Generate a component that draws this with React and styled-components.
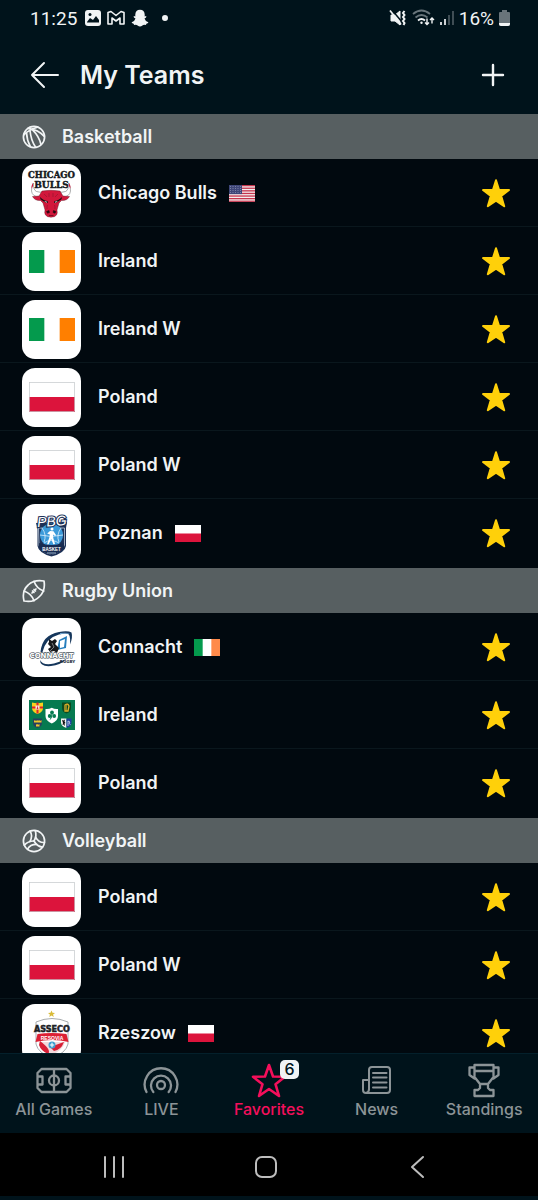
import React from "react"
import styled, { createGlobalStyle } from "styled-components"

const GlobalStyle = createGlobalStyle`
  * {
    box-sizing: border-box;
  }

  body {
    margin: 0;
    background: #00131b;
    font-family: Inter, "Liberation Sans", sans-serif;
  }
`

/* SHELL */

const Screen = styled.div`
  display: flex;
  flex-direction: column;
  height: 100vh;
  padding-bottom: 4px;
  background: #00131b;
  color: #f1f4f5;
`

const StatusBar = styled.div`
  display: flex;
  justify-content: space-between;
  align-items: center;
  height: 36px;
  padding: 0 28px 0 30px;
  flex: none;
  font-family: Roboto, sans-serif;
  font-size: 19px;
`

const StatusGroup = styled.div`
  display: flex;
  align-items: center;
  gap: ${(p) => p.$gap}px;

  svg {
    display: block;
  }
`

const Clock = styled.span`
  margin-right: 2px;
`

const Header = styled.header`
  display: flex;
  align-items: center;
  height: 78px;
  padding: 0 32px 0 30px;
  flex: none;
`

const Title = styled.h1`
  flex: 1;
  margin: 0 0 0 20px;
  font-size: 25px;
  font-weight: 600;
  line-height: 30px;
`

const IconButton = styled.button`
  display: block;
  padding: 0;
  border: 0;
  background: none;
  color: inherit;
  cursor: pointer;

  svg {
    display: block;
  }
`

/* TEAM LIST */

const Content = styled.main`
  flex: 1;
  min-height: 0;
  overflow-y: auto;
  scrollbar-width: none;
  background: #01090f;
`

const SectionTitle = styled.h2`
  display: flex;
  align-items: center;
  gap: 16px;
  height: 45px;
  margin: 0;
  padding: 0 22px;
  background: #575f61;
  font-size: 18px;
  font-weight: 600;
`

const List = styled.ul`
  margin: 0;
  padding: 0 0 1px;
  list-style: none;
`

const Row = styled.li`
  display: flex;
  align-items: center;
  height: 68px;
  padding: 0 28px 0 22px;

  & + & {
    box-shadow: 0 -1px 0 #0a171d;
  }
`

const Tile = styled.div`
  display: grid;
  place-items: center;
  width: 59px;
  height: 59px;
  border-radius: 13px;
  background: #fff;

  svg {
    display: block;
  }
`

const TeamName = styled.span`
  margin: 0 12px 0 17px;
  font-size: 18px;
  font-weight: 600;
  line-height: 24px;
`

const StarButton = styled(IconButton)`
  margin-left: auto;
`

/* BOTTOM NAVIGATION */

const Tabs = styled.nav`
  display: grid;
  grid-template-columns: repeat(5, 1fr);
  height: 80px;
  flex: none;
  border-top: 1px solid #04202b;
`

const Tab = styled.a`
  display: flex;
  flex-direction: column;
  align-items: center;
  padding-top: 8px;
  color: ${(p) => (p.$active ? "#f40f5b" : "#8c9497")};
  font-size: 16px;
  font-weight: 500;
  line-height: 22px;
  text-decoration: none;
  white-space: nowrap;
`

const TabIcon = styled.span`
  position: relative;
  height: 36px;

  svg {
    display: block;
  }
`

const Badge = styled.span`
  position: absolute;
  top: -2px;
  left: 29px;
  width: 19px;
  height: 19px;
  border-radius: 5px;
  background: #eff2f4;
  color: #00131b;
  font-size: 16px;
  line-height: 19px;
  text-align: center;
`

const SystemNav = styled.nav`
  display: flex;
  justify-content: space-between;
  align-items: center;
  height: 63px;
  padding: 5px 20% 0 19%;
  flex: none;
  background: #000;
  color: #bdbdbd;
`

/* FLAGS */

const PolandFlag = ({ width, height, outline }) => (
  <svg width={width} height={height} viewBox="0 0 46 30" preserveAspectRatio="none">
    <rect width="46" height="30" fill="#fff" />
    <rect y="15" width="46" height="15" fill="#dc143c" />
    {outline && <rect x=".5" y=".5" width="45" height="29" fill="none" stroke="#c4c8ca" strokeWidth=".7" />}
  </svg>
)

const IrelandFlag = ({ width, height, orange = "#ff7f00" }) => (
  <svg width={width} height={height} viewBox="0 0 3 2" preserveAspectRatio="none">
    <rect width="3" height="2" fill="#fff" />
    <rect width="1" height="2" fill="#049a4d" />
    <rect x="2" width="1" height="2" fill={orange} />
  </svg>
)

const UsaFlag = () => (
  <svg width="26" height="17" viewBox="0 0 26 17">
    <rect width="26" height="17" fill="#f4eeee" />
    {[0, 1, 2, 3, 4, 5, 6].map((i) => (
      <rect key={i} y={i * 2.6} width="26" height="1.3" fill="#c5344c" />
    ))}
    <rect width="13" height="9.1" fill="#3e4678" />
    {[1.5, 3.5, 5.5, 7.5].map((y) =>
      [1.5, 4, 6.5, 9, 11.5].map((x) => <circle key={`${x}-${y}`} cx={x} cy={y} r=".45" fill="#b9bdd4" />)
    )}
  </svg>
)

const IrfuFlag = () => (
  <svg width="46" height="30" viewBox="0 0 46 30">
    <rect width="46" height="30" fill="#067a50" />
    <path d="M3 2.5q5 1.500 11 0V8q0 4-5.500 6Q3 12 3 8Z" fill="#f6d21c" />
    <path d="M7.500 2.500h2v4H14v2H9.500v5h-2v-5H3v-2h4.500Z" fill="#dc2430" />
    <rect x="6.500" y="5.500" width="4" height="4" fill="#f8e9e0" />
    <path d="m8.500 5.800.900 3.200h-1.800Z" fill="#dc2430" />
    <path d="M33 2.500h9V8q0 4-4.500 5.500Q33 12 33 8Z" fill="#0c4a20" />
    <path d="M36 11V5q3-2 4 1l-1 5Z" fill="none" stroke="#dcae29" strokeWidth="1.300" />
    <path d="M37.500 5v6" stroke="#dcae29" strokeWidth=".6" />
    <path d="M4 18.500h9V23q0 3.500-4.500 5Q4 26.500 4 23Z" fill="#28405f" />
    <path d="m5 20 1.200 1 .8-1 .8 1L9 20v2.500H5Zm4 0 1 1 .8-1 .8 1 .900-1v2.500H9Zm-2 4 1 .8.7-.8.8.8 1-.8v2.500H7Z" fill="#ecc62c" />
    <path d="M32 18.500h5.500V28Q32 26 32 22.500Z" fill="#f3f3f3" />
    <path d="M37.500 18.500h5v4q0 4-5 5.500Z" fill="#1c3f9c" />
    <path d="m33 20 1.500.5 1.500-1-.5 2 1 1.500-1 .5.500 2.500-1.500-1.500-1 .5.500-2Z" fill="#111" />
    <path d="M39 26v-5l2 1-1 1.500 1.500 1" fill="none" stroke="#d7def0" strokeWidth=".8" />
    <path d="M16.500 9q3.200.500 6.300-1.200Q25.800 9.500 29 9v7q0 5-6.200 7.500Q16.500 21 16.500 16Z" fill="#fff" />
    <circle cx="23" cy="12.500" r="1.900" fill="#077b50" />
    <circle cx="20.700" cy="16" r="1.900" fill="#077b50" />
    <circle cx="25.200" cy="16" r="1.900" fill="#077b50" />
    <path d="M23 13.500q0 4-1.800 6" fill="none" stroke="#077b50" strokeWidth="1" />
  </svg>
)

/* CLUB LOGOS */

const BullsLogo = () => (
  <svg width="59" height="59" viewBox="0 0 59 59">
    <g fill="#15191c" stroke="#15191c" strokeWidth=".4" fontFamily="DejaVu Serif, Liberation Serif, serif" fontWeight="700" textAnchor="middle">
      <text x="29.500" y="14" fontSize="8.500">CHICAGO</text>
      <text x="29.500" y="23.500" fontSize="9">BULLS</text>
    </g>
    <g fill="#fff" stroke="#77797b" strokeWidth=".6" strokeLinejoin="round">
      <path d="M18 33.500q-8-1-8.500-6.500-.3-4 2-8-.5 7 3 8.500 3 1.200 9 .5Z" />
      <path d="M40 33.500q8-1 8.500-6.500.3-4-2-8 .5 7-3 8.500-3 1.200-9 .5Z" />
    </g>
    <path d="M10.800 18.800q-1.600 3-1.200 6l1.500-3ZM47.200 18.800q1.600 3 1.200 6l-1.500-3Z" fill="#d2173b" />
    <path d="M20 27q9-1.500 18 0l3 5 6.500.5q-2.500 4.500-8 4L37 39l-2 7q.8 3-.5 5-1.500 2.200-5.500 2.200T23.500 51q-1.300-2-.5-5l-2-7-2.500-2.500q-5.500.5-8-4L17 32Z" fill="#d2173b" stroke="#531323" strokeWidth=".4" />
    <path d="M18 33q4 4 7.500 4l.5 2-3-.8-4.500-3ZM40 33q-4 4-7.500 4l-.5 2 3-.8 4.500-3Z" fill="#161012" />
    <path d="m22 37 3 .8-.5 1ZM36 37l-3 .8.500 1Z" fill="#fff" />
    <path d="M25.500 41q-.8 2-.4 4M32.500 41q.8 2 .4 4M27 29v4m4-4v4M22 30l3 3m11-3-3 3" fill="none" stroke="#8d1631" strokeWidth=".6" />
    <path d="m24.500 47.500 2.500-1 .5 2-2 .8Zm9.500 0-2.500-1-.5 2 2 .8Zm-7 4h4.500" fill="#24080f" stroke="#24080f" strokeWidth=".5" />
  </svg>
)

const PbgLogo = () => (
  <svg width="59" height="59" viewBox="0 0 59 59">
    <path d="m14 19 31-1-1 6v18q-1 7-14.500 10.500Q16.500 49 15.500 42V25Z" fill="#1c3157" />
    <path d="M16.500 24h26v17q-2 6-13 9.500-11.500-3-12.500-9Z" fill="none" stroke="#d5e1eb" strokeWidth=".7" />
    <circle cx="29.500" cy="31" r="11.500" fill="#3c9bda" />
    <path d="M18 31q11 3 23 0M20 24q5 7 2 14M39 24q-5 7-2 14M22 39q7-5 15 0" fill="none" stroke="#ecf8ff" strokeWidth=".7" />
    <circle cx="30" cy="25" r="1.500" fill="#fff" />
    <path d="m28 27 3.500.3 2.500 3.700-.8 1-2.200-1.500.3 3.500 1.700 6-1.500.5-2.300-5.500-2.700 5.500h-1.500l2.500-7.500.3-2.500-2.600-1Z" fill="#fff" />
    <path d="M17 39q12.500 4 25 0v5q-3 4-12.500 7Q19 48 17 44Z" fill="#172b50" />
    <text x="29.500" y="46.500" fill="#fff" fontFamily="Liberation Sans, sans-serif" fontSize="4.500" fontWeight="700" textAnchor="middle">BASKET</text>
    <path d="M25 49h9" stroke="#9bb2c9" strokeWidth="1" />
    <text x="30" y="22" transform="rotate(-4 30 20)" fill="#fff" stroke="#1c3157" strokeWidth="2.200" paintOrder="stroke" fontFamily="Liberation Sans, sans-serif" fontSize="14" fontStyle="italic" textAnchor="middle">PBG</text>
  </svg>
)

const ConnachtLogo = () => (
  <svg width="59" height="59" viewBox="0 0 59 59">
    <path d="M18.500 34Q20 17 37 14q9-1.500 12.500.5 1.500 5-1.500 12 .5-7-1-10-3-2-10 0Q24 20 20.500 34Z" fill="#15365b" />
    <path d="M38 15q8-1 10 1-5-1-10 .5Z" fill="#6b9fcb" />
    <path d="M18 42q3 6 14 3.500 8-2 13-5-7 7-16 7.500Q18 49 18 42Z" fill="#15365b" />
    <path d="m37 22 8-4-1 12-9 2Z" fill="#257dbc" />
    <path d="m38 23 5-2-1 8-4 1Z" fill="#fff" />
    <path d="m27 21 3 2 3-2 2 2-2 3 4 4-2 5-3-2-4 1-2-3 3-2-3-3 1-2Z" fill="#17191c" />
    <path d="m30 25 2 4-4 4" fill="none" stroke="#a3a8aa" strokeWidth=".7" />
    <text x="29.500" y="40" fill="#fff" stroke="#4a545d" strokeWidth="1.200" paintOrder="stroke" fontFamily="DejaVu Sans, sans-serif" fontSize="7" fontWeight="700" textAnchor="middle">CONNACHT</text>
    <text x="45.500" y="45" fill="#172638" fontFamily="DejaVu Sans, sans-serif" fontSize="4" fontWeight="700" textAnchor="middle">RUGBY</text>
  </svg>
)

const AssecoLogo = () => (
  <svg width="59" height="59" viewBox="0 0 59 59">
    <path d="m29.500 6.500 1 2.200 2.500.3-1.900 1.500.6 2.500-2.200-1.400-2.200 1.400.6-2.500L26 9l2.500-.3Z" fill="#d9bb39" />
    <path d="M14 18q16-7 32 0v22q-2 9-16 14-14-5-16-14Z" fill="#fff" stroke="#a8acaf" strokeWidth="1" />
    <path d="M17 38q2 8 13 13 11-5 13-13Z" fill="#f2d9dc" />
    <path d="M18 37q12 9 8 13-7-3-9-9Zm24 1q-3 8-10 9l-4-4Z" fill="#d81f36" />
    <path d="M15.500 30q14-2 29 0l2 8q-16-4-33 0Z" fill="#dc2034" />
    <text x="30" y="35.500" fill="#fff" fontFamily="Liberation Sans, sans-serif" fontSize="5" fontWeight="700" textAnchor="middle">RESOVIA</text>
    <text x="30" y="27.500" fill="#1d2226" stroke="#1d2226" strokeWidth=".5" fontFamily="DejaVu Sans Condensed, Liberation Sans, sans-serif" fontSize="9" fontWeight="700" textAnchor="middle">ASSECO</text>
    <circle cx="30" cy="41" r="3.500" fill="#3c9ccf" />
    <path d="M30 38.800v4.400M27.800 41h4.400" stroke="#fff" strokeWidth="1.100" />
  </svg>
)

/* ICONS */

const Line = ({ size = 24, width = size, height = size, stroke = 2, children }) => (
  <svg width={width} height={height} viewBox={`0 0 ${width} ${height}`} fill="none" stroke="currentColor" strokeWidth={stroke} strokeLinecap="round" strokeLinejoin="round" aria-hidden="true">
    {children}
  </svg>
)

const BasketballIcon = () => (
  <Line stroke={1.7}>
    <circle cx="12" cy="12" r="10.600" />
    <path d="M6 3.300Q16.500 4.500 22.300 11.500M1.900 9.500Q7.500 4.500 15.500 2.200M4.500 7.500Q4.800 15 8.300 21.500M8 5.500Q9 15.500 13.500 22M10.500 4.800Q17 11 19 19.500" />
  </Line>
)

const RugbyIcon = () => (
  <Line stroke={1.7}>
    <path d="M2 22Q-.5 12 6.200 6 12 .3 22 2q1.700 9.500-4.500 15.500Q11.500 24 2 22Z" />
    <path d="M12 2.200Q14.500 9.500 21.800 12M2 12q7.500 2.500 10 9.800" />
    <path d="m10 14 4-4M10.500 12l1.500 1.500M12 10.500l1.500 1.500" />
  </Line>
)

const VolleyballIcon = () => (
  <Line stroke={1.7}>
    <circle cx="12" cy="12" r="10.600" />
    {[20, 140, 260].map((angle) => (
      <path key={angle} transform={`rotate(${angle} 12 12)`} d="M12 12Q13.200 6 9.500 1.800M8.300 14Q9.500 7.500 5 4.200" />
    ))}
  </Line>
)

const StarIcon = () => (
  <svg width="28" height="30" viewBox="0 0 28 30" aria-hidden="true">
    <path d="M14 2.200 17 11.700 27 12 19.200 18 22.200 28.300 14 22.600 5.800 28.300 8.800 18 1 12 11 11.700Z" fill="#ffd00a" stroke="#ffd00a" strokeWidth="2" strokeLinejoin="round" />
  </svg>
)

const AllGamesIcon = () => (
  <Line size={36} stroke={2.3}>
    <path d="M5.500 7h25l4 4v15l-4 4h-25l-4-4V11ZM18 7v23M1.500 14.500h5v8h-5M34.500 14.500h-5v8h5" />
    <circle cx="18" cy="18.500" r="5" />
  </Line>
)

const LiveIcon = () => (
  <Line size={36} stroke={2.3}>
    <path d="M3.500 30a16.300 16.300 0 1 1 29 0M10.300 30a10 10 0 1 1 15.400 0" />
    <circle cx="18" cy="23" r="4" />
  </Line>
)

const FavoritesIcon = () => (
  <Line size={36} stroke={2.6}>
    <path d="m18 3 4 11.500 12 .3-9.500 7.400L28 34l-10-7-10 7 3.500-11.800L2 14.800l12-.3Z" />
  </Line>
)

const NewsIcon = () => (
  <Line size={36}>
    <path d="M10 28V8q0-3 3-3h15q3 0 3 3v20q0 3-3 3H7q-3 0-3-3V18h6M10 27q0 3.500-3 4M14 11h13.500M14 15.500h13.500M14 20.500h13.500M14 25.500h13.500" />
  </Line>
)

const StandingsIcon = () => (
  <Line size={36} stroke={2.3}>
    <path d="M8.500 3h19v12L22 22h-8l-5.500-7ZM8.500 9h19M8.500 5.500h-5V13l5 3.500M27.500 5.500h5V13l-5 3.500M14 22v4l-2 2H8.500v6h19v-6H24l-2-2v-4" />
  </Line>
)

const StatusIcons = () => (
  <StatusGroup $gap={6}>
    <Clock>11:25</Clock>
    <svg width="16" height="16" viewBox="0 0 16 16">
      <rect width="16" height="16" rx="3" fill="#f1f4f5" />
      <path d="m2 12 3-4 3 2 3-4 3 4v2.500H2Z" fill="#00131b" />
      <circle cx="5" cy="4.500" r="1.500" fill="#00131b" />
    </svg>
    <Line width={18} height={16} stroke={1.6}>
      <path d="M1 2.500 4 1.500l5 4 5-4 3 1v11.500h-4V8l-4 3-4-3v6H1Z" />
    </Line>
    <svg width="18" height="18" viewBox="0 0 18 18">
      <path d="M9 .8q4.500 0 4.700 4.700v2l1.300-.4q1 .7-.2 1.600l-1.300.8q.8 2.800 3.800 3.800.5.900-1.900 1.400-.3 1.300-1.200 1.200-1.700-.3-2.800.6Q10.200 17.400 9 17.400t-2.400-.9q-1.100-.9-2.800-.6-.9.100-1.200-1.200-2.400-.5-1.900-1.400 3-1 3.800-3.800l-1.300-.8Q2 7.800 3 7.100l1.300.4v-2Q4.500.8 9 .8Z" fill="#f1f4f5" />
    </svg>
    <Line width={20} height={8}>
      <circle cx="10" cy="4" r="2" fill="currentColor" />
    </Line>
  </StatusGroup>
)

const PhoneState = () => (
  <StatusGroup $gap={5}>
    <svg width="18" height="18" viewBox="0 0 18 18" fill="none" stroke="#f1f4f5">
      <path d="M2 6h4l5-4v14l-5-4H2Z" fill="#f1f4f5" />
      <path d="m3 1 10 12" stroke="#00131b" strokeWidth="1.500" />
      <path d="m1 1.500 11 14" strokeWidth="1.700" />
      <path d="m15.500 2-1.500 2 1.500 2-1.500 2 1.500 2-1.500 2 1.500 2-1 2" strokeWidth="2" />
    </svg>
    <svg width="23" height="18" viewBox="0 0 23 18" fill="none" stroke="#f1f4f5" strokeWidth="1.800">
      <path d="M1 5q8.500-7 17 0M3.500 8.500q6-5 12 0" stroke="#68757b" />
      <path d="M6 11.500q3.500-3 7 0" />
      <circle cx="9.500" cy="13.800" r="1.200" fill="#f1f4f5" stroke="none" />
      <path d="M15 9.500v6m-2-2 2 2 2-2M20 14.500V9m-2 2 2-2 2 2" strokeWidth="1.400" />
    </svg>
    <svg width="14" height="16" viewBox="0 0 14 16" strokeWidth="1.700">
      <path d="M1 12v3M5 9v6" stroke="#f1f4f5" />
      <path d="M9 5v10M13 1v14" stroke="#4b595f" />
    </svg>
    <span>16%</span>
    <svg width="11" height="16" viewBox="0 0 11 16">
      <path d="M3 0h5v2h2q1 0 1 1v11q0 2-2 2H2q-2 0-2-2V3q0-1 1-1h2Z" fill="#69747a" />
      <path d="M0 13h11v1q0 2-2 2H2q-2 0-2-2Z" fill="#f1f4f5" />
    </svg>
  </StatusGroup>
)

/* DATA */

const polandCrest = <PolandFlag width={46} height={30} outline />
const irelandCrest = <IrelandFlag width={46} height={23} />
const polandSmall = <PolandFlag width={26} height={17} />

const sections = [
  {
    title: "Basketball",
    icon: <BasketballIcon />,
    teams: [
      { name: "Chicago Bulls", crest: <BullsLogo />, flag: <UsaFlag /> },
      { name: "Ireland", crest: irelandCrest },
      { name: "Ireland W", crest: irelandCrest },
      { name: "Poland", crest: polandCrest },
      { name: "Poland W", crest: polandCrest },
      { name: "Poznan", crest: <PbgLogo />, flag: polandSmall },
    ],
  },
  {
    title: "Rugby Union",
    icon: <RugbyIcon />,
    teams: [
      { name: "Connacht", crest: <ConnachtLogo />, flag: <IrelandFlag width={26} height={17} orange="#ff8a4a" /> },
      { name: "Ireland", crest: <IrfuFlag /> },
      { name: "Poland", crest: polandCrest },
    ],
  },
  {
    title: "Volleyball",
    icon: <VolleyballIcon />,
    teams: [
      { name: "Poland", crest: polandCrest },
      { name: "Poland W", crest: polandCrest },
      { name: "Rzeszow", crest: <AssecoLogo />, flag: polandSmall },
    ],
  },
]

const tabs = [
  { label: "All Games", icon: <AllGamesIcon /> },
  { label: "LIVE", icon: <LiveIcon /> },
  { label: "Favorites", icon: <FavoritesIcon />, badge: 6, active: true },
  { label: "News", icon: <NewsIcon /> },
  { label: "Standings", icon: <StandingsIcon /> },
]

function App() {
  return (
    <Screen>
      <GlobalStyle />

      <StatusBar>
        <StatusIcons />
        <PhoneState />
      </StatusBar>

      <Header>
        <IconButton type="button" aria-label="Back">
          <Line width={30} height={28}>
            <path d="M28 14H2M14 2 2 14l12 12" />
          </Line>
        </IconButton>
        <Title>My Teams</Title>
        <IconButton type="button" aria-label="Add team">
          <Line size={26} stroke={2.4}>
            <path d="M13 3v20M3 13h20" />
          </Line>
        </IconButton>
      </Header>

      <Content>
        {sections.map((section) => (
          <section key={section.title}>
            <SectionTitle>
              {section.icon}
              {section.title}
            </SectionTitle>
            <List>
              {section.teams.map((team) => (
                <Row key={team.name}>
                  <Tile>{team.crest}</Tile>
                  <TeamName>{team.name}</TeamName>
                  {team.flag}
                  <StarButton type="button" aria-label={`Remove ${team.name} from favorites`}>
                    <StarIcon />
                  </StarButton>
                </Row>
              ))}
            </List>
          </section>
        ))}
      </Content>

      <Tabs>
        {tabs.map((tab) => (
          <Tab key={tab.label} href="#" $active={tab.active}>
            <TabIcon>
              {tab.icon}
              {tab.badge && <Badge>{tab.badge}</Badge>}
            </TabIcon>
            {tab.label}
          </Tab>
        ))}
      </Tabs>

      <SystemNav>
        <IconButton type="button" aria-label="Recent apps">
          <Line size={24}>
            <path d="M3 2v20M12 2v20M21 2v20" />
          </Line>
        </IconButton>
        <IconButton type="button" aria-label="Home">
          <Line size={24}>
            <rect x="2" y="2" width="20" height="20" rx="6" />
          </Line>
        </IconButton>
        <IconButton type="button" aria-label="Back to previous app">
          <Line size={24}>
            <path d="M17 2 6 12l11 10" />
          </Line>
        </IconButton>
      </SystemNav>
    </Screen>
  )
}

export default App
